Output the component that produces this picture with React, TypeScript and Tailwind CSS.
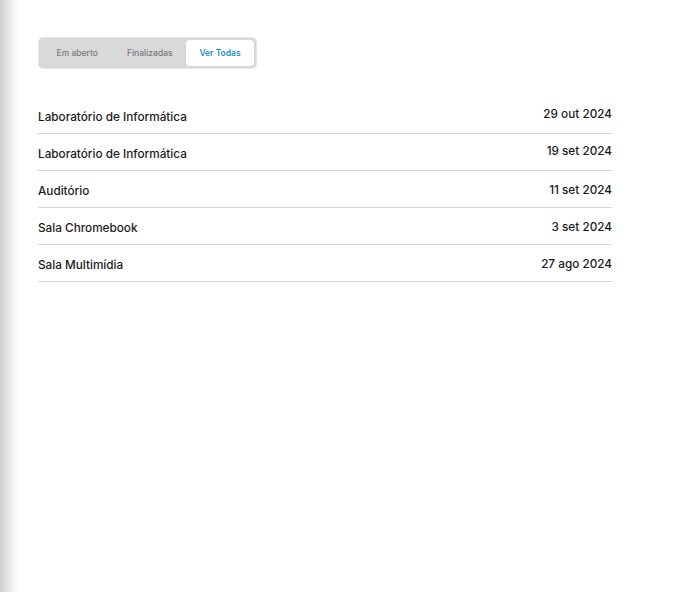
const rows = [
  { name: "Laboratório de Informática", date: "29 out 2024", lift: true },
  { name: "Laboratório de Informática", date: "19 set 2024", lift: true },
  { name: "Auditório", date: "11 set 2024", lift: false },
  { name: "Sala Chromebook", date: "3 set 2024", lift: false },
  { name: "Sala Multimídia", date: "27 ago 2024", lift: false },
]

function Tabs() {
  return (
    <div className="flex w-[219px] h-[32px] items-center rounded-[5px] bg-[#d9d9d9] border border-[#e6e6e6] p-[2px] text-[8.5px] font-medium">
      <button className="flex-1 h-full text-[#7a7a7a]">Em aberto</button>
      <button className="flex-1 h-full text-[#7a7a7a]">Finalizadas</button>
      <button className="w-[68px] h-full rounded-[4px] bg-white text-[#1a8ec4] font-semibold">Ver Todas</button>
    </div>
  )
}

export default function App() {
  return (
    <div
      className="relative h-[592px] w-[682px] bg-white overflow-hidden"
      style={{ fontFamily: "Inter, 'Noto Sans', sans-serif" }}
    >
      <div className="absolute left-0 top-0 h-full w-[18px] bg-gradient-to-r from-[#d0d0d0] to-white" />
      <div className="pl-[38px] pt-[37px] w-[612px]">
        <Tabs />
        <ul className="mt-[28px]">
          {rows.map((r, i) => (
            <li key={i} className="flex justify-between items-center h-[37px] border-b border-[#d6d6d6] text-[11.75px] font-medium text-[#1a1a1a]">
              <span className="pt-[5px]">{r.name}</span>
              <span className={r.lift ? "pb-[1px]" : "pt-[4px]"}>{r.date}</span>
            </li>
          ))}
        </ul>
      </div>
    </div>
  )
}
